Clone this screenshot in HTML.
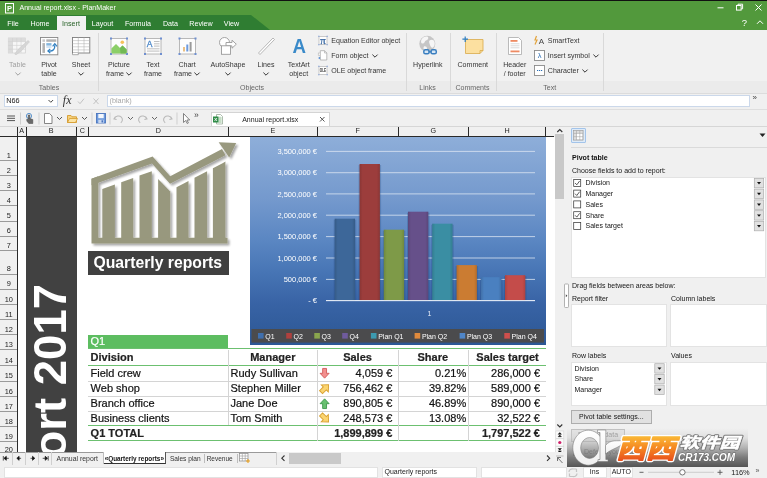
<!DOCTYPE html><html><head><meta charset="utf-8"><title>Annual report.xlsx - PlanMaker</title><style>
*{box-sizing:border-box;margin:0;padding:0}
html,body{width:767px;height:478px;overflow:hidden;background:#f0f0f0}
body{position:relative;font-family:"Liberation Sans",sans-serif;font-size:7.5px;color:#333}
.a{position:absolute}
.t{position:absolute;white-space:nowrap;line-height:10px;height:10px}
.c{text-align:center}
.r{text-align:right}
.ui{color:#3b3b3b}
svg{position:absolute;overflow:visible}
</style></head><body><div id="w" style="position:absolute;left:0;top:0;width:767px;height:478px;will-change:transform">
<div class="a" style="left:0px;top:0px;width:767px;height:30px;background:#52993c"></div>
<div class="a" style="left:0px;top:0px;width:767px;height:1.3px;background:#111"></div>
<svg style="left:0;top:15px" width="300" height="15"><polygon points="0,0 251,0 270,15 0,15" fill="#2f7d32"/></svg>
<svg style="left:5px;top:3px" width="10" height="11"><rect x="0.5" y="0.5" width="8" height="9.5" fill="none" stroke="#fff" stroke-width="1"/><text x="4.5" y="8" font-size="7.5" font-weight="bold" fill="#fff" text-anchor="middle" font-family="Liberation Sans, sans-serif">P</text></svg>
<div class="t" style="top:3.30px;font-size:7.06px;line-height:10px;height:10px;color:#fff;left:19.5px;">Annual report.xlsx - PlanMaker</div>
<div class="a" style="left:56.5px;top:16px;width:29.5px;height:14px;background:#f1f1f1"></div>
<div class="t" style="top:18.70px;font-size:7.15px;line-height:10px;height:10px;color:#fff;left:-17.0px;width:60px;text-align:center;">File</div>
<div class="t" style="top:18.70px;font-size:7.15px;line-height:10px;height:10px;color:#fff;left:10.0px;width:60px;text-align:center;">Home</div>
<div class="t" style="top:18.70px;font-size:7.15px;line-height:10px;height:10px;color:#2a632a;left:41.0px;width:60px;text-align:center;">Insert</div>
<div class="t" style="top:18.70px;font-size:7.15px;line-height:10px;height:10px;color:#fff;left:72.5px;width:60px;text-align:center;">Layout</div>
<div class="t" style="top:18.70px;font-size:7.15px;line-height:10px;height:10px;color:#fff;left:108.0px;width:60px;text-align:center;">Formula</div>
<div class="t" style="top:18.70px;font-size:7.15px;line-height:10px;height:10px;color:#fff;left:140.5px;width:60px;text-align:center;">Data</div>
<div class="t" style="top:18.70px;font-size:7.15px;line-height:10px;height:10px;color:#fff;left:171.0px;width:60px;text-align:center;">Review</div>
<div class="t" style="top:18.70px;font-size:7.15px;line-height:10px;height:10px;color:#fff;left:201.5px;width:60px;text-align:center;">View</div>
<svg style="left:700px;top:0" width="67" height="30" fill="none" stroke="#fff" stroke-width="1">
<path d="M17.5 7.8h6"/>
<rect x="36.5" y="5.5" width="4.6" height="4.6"/><path d="M38 5.5v-1.3h4.6v4.6h-1.4"/>
<path d="M55.5 4.5l6 6M61.500 4.5l-6 6"/>
<path d="M57 23.8l3-3 3 3"/>
</svg>
<div class="t" style="top:15.50px;font-size:9.5px;line-height:13px;height:13px;color:#fff;left:739.5px;width:10px;text-align:center;">?</div>
<div class="a" style="left:0px;top:30px;width:767px;height:63px;background:#f1f1f1"></div>
<div class="a" style="left:0px;top:81px;width:767px;height:11.5px;background:#ebebeb"></div>
<div class="a" style="left:0px;top:92.5px;width:767px;height:1px;background:#dcdcdc"></div>
<div class="a" style="left:98px;top:33px;width:1px;height:58px;background:#d9d9d9"></div>
<div class="a" style="left:405.5px;top:33px;width:1px;height:58px;background:#d9d9d9"></div>
<div class="a" style="left:449.5px;top:33px;width:1px;height:58px;background:#d9d9d9"></div>
<div class="a" style="left:495.5px;top:33px;width:1px;height:58px;background:#d9d9d9"></div>
<div class="a" style="left:603px;top:33px;width:1px;height:58px;background:#d9d9d9"></div>
<div class="t" style="top:59.50px;font-size:7.05px;line-height:10px;height:10px;color:#a0a0a0;left:-22.5px;width:80px;text-align:center;">Table</div>
<svg style="left:14.5px;top:71.8px" width="6" height="4"><path d="M0.4 0.6l2.6 2.6 2.6-2.6" fill="none" stroke="#a0a0a0" stroke-width="1"/></svg>
<div class="t" style="top:59.50px;font-size:7.05px;line-height:10px;height:10px;color:#353535;left:9.0px;width:80px;text-align:center;">Pivot</div>
<div class="t" style="top:68.50px;font-size:7.05px;line-height:10px;height:10px;color:#353535;left:9.0px;width:80px;text-align:center;">table</div>
<div class="t" style="top:59.50px;font-size:7.05px;line-height:10px;height:10px;color:#353535;left:41.0px;width:80px;text-align:center;">Sheet</div>
<svg style="left:78px;top:71.8px" width="6" height="4"><path d="M0.4 0.6l2.6 2.6 2.6-2.6" fill="none" stroke="#353535" stroke-width="1"/></svg>
<div class="t" style="top:59.50px;font-size:7.05px;line-height:10px;height:10px;color:#353535;left:79.0px;width:80px;text-align:center;">Picture</div>
<div class="t" style="top:68.50px;font-size:7.05px;line-height:10px;height:10px;color:#353535;left:79.0px;width:80px;text-align:center;">frame <svg style="position:static;display:inline-block;vertical-align:0" width="6" height="4"><path d="M0.4 0.6l2.6 2.6 2.6-2.6" fill="none" stroke="#353535" stroke-width="1"/></svg></div>
<div class="t" style="top:59.50px;font-size:7.05px;line-height:10px;height:10px;color:#353535;left:113.0px;width:80px;text-align:center;">Text</div>
<div class="t" style="top:68.50px;font-size:7.05px;line-height:10px;height:10px;color:#353535;left:113.0px;width:80px;text-align:center;">frame</div>
<div class="t" style="top:59.50px;font-size:7.05px;line-height:10px;height:10px;color:#353535;left:147.0px;width:80px;text-align:center;">Chart</div>
<div class="t" style="top:68.50px;font-size:7.05px;line-height:10px;height:10px;color:#353535;left:147.0px;width:80px;text-align:center;">frame <svg style="position:static;display:inline-block;vertical-align:0" width="6" height="4"><path d="M0.4 0.6l2.6 2.6 2.6-2.6" fill="none" stroke="#353535" stroke-width="1"/></svg></div>
<div class="t" style="top:59.50px;font-size:7.05px;line-height:10px;height:10px;color:#353535;left:188.0px;width:80px;text-align:center;">AutoShape</div>
<svg style="left:225px;top:71.8px" width="6" height="4"><path d="M0.4 0.6l2.6 2.6 2.6-2.6" fill="none" stroke="#353535" stroke-width="1"/></svg>
<div class="t" style="top:59.50px;font-size:7.05px;line-height:10px;height:10px;color:#353535;left:226.0px;width:80px;text-align:center;">Lines</div>
<svg style="left:263px;top:71.8px" width="6" height="4"><path d="M0.4 0.6l2.6 2.6 2.6-2.6" fill="none" stroke="#353535" stroke-width="1"/></svg>
<div class="t" style="top:59.50px;font-size:7.05px;line-height:10px;height:10px;color:#353535;left:258.7px;width:80px;text-align:center;">TextArt</div>
<div class="t" style="top:68.50px;font-size:7.05px;line-height:10px;height:10px;color:#353535;left:258.7px;width:80px;text-align:center;">object</div>
<div class="t" style="top:59.50px;font-size:7.05px;line-height:10px;height:10px;color:#353535;left:387.8px;width:80px;text-align:center;">Hyperlink</div>
<div class="t" style="top:59.50px;font-size:7.05px;line-height:10px;height:10px;color:#353535;left:432.8px;width:80px;text-align:center;">Comment</div>
<div class="t" style="top:59.50px;font-size:7.05px;line-height:10px;height:10px;color:#353535;left:474.70000000000005px;width:80px;text-align:center;">Header</div>
<div class="t" style="top:68.50px;font-size:7.05px;line-height:10px;height:10px;color:#353535;left:474.70000000000005px;width:80px;text-align:center;">/ footer</div>
<div class="t" style="top:82.60px;font-size:7.05px;line-height:10px;height:10px;color:#666;left:19.0px;width:60px;text-align:center;">Tables</div>
<div class="t" style="top:82.60px;font-size:7.05px;line-height:10px;height:10px;color:#666;left:222.0px;width:60px;text-align:center;">Objects</div>
<div class="t" style="top:82.60px;font-size:7.05px;line-height:10px;height:10px;color:#666;left:397.5px;width:60px;text-align:center;">Links</div>
<div class="t" style="top:82.60px;font-size:7.05px;line-height:10px;height:10px;color:#666;left:442.5px;width:60px;text-align:center;">Comments</div>
<div class="t" style="top:82.60px;font-size:7.05px;line-height:10px;height:10px;color:#666;left:519.7px;width:60px;text-align:center;">Text</div>
<div class="t" style="top:35.50px;font-size:7.05px;line-height:10px;height:10px;color:#353535;left:331.3px;">Equation Editor object</div>
<div class="t" style="top:50.50px;font-size:7.05px;line-height:10px;height:10px;color:#353535;left:331.3px;">Form object<svg style="position:static;display:inline-block;margin-left:3px" width="6" height="4"><path d="M0.4 0.6l2.6 2.6 2.6-2.6" fill="none" stroke="#353535" stroke-width="1"/></svg></div>
<div class="t" style="top:65.50px;font-size:7.05px;line-height:10px;height:10px;color:#353535;left:331.3px;">OLE object frame</div>
<div class="t" style="top:35.50px;font-size:7.05px;line-height:10px;height:10px;color:#353535;left:547.8px;">SmartText</div>
<div class="t" style="top:50.50px;font-size:7.05px;line-height:10px;height:10px;color:#353535;left:547.8px;">Insert symbol<svg style="position:static;display:inline-block;margin-left:3px" width="6" height="4"><path d="M0.4 0.6l2.6 2.6 2.6-2.6" fill="none" stroke="#353535" stroke-width="1"/></svg></div>
<div class="t" style="top:65.50px;font-size:7.05px;line-height:10px;height:10px;color:#353535;left:547.8px;">Character<svg style="position:static;display:inline-block;margin-left:3px" width="6" height="4"><path d="M0.4 0.6l2.6 2.6 2.6-2.6" fill="none" stroke="#353535" stroke-width="1"/></svg></div>

<svg style="left:0;top:30px" width="767" height="64">
<!-- table (disabled) -->
<rect x="8.300" y="8" width="17" height="15" fill="#f7f7f7" stroke="#cdcdcd" stroke-width="0.700"/>
<rect x="8.300" y="8" width="17" height="3.600" fill="#dcdcdc"/><rect x="8.300" y="8" width="4.200" height="15" fill="#dcdcdc"/>
<path d="M8.300 11.600h17M8.300 15.400h17M8.300 19.200h17M12.500 8v15M16.800 8v15M21.100 8v15" fill="none" stroke="#d0d0d0" stroke-width="0.600"/>
<path d="M28 10.500l-9.500 8.500-3.800 5 1.300 0.800 5-3.500 8.500-9.500z" fill="#d6d6d6" stroke="#c6c6c6" stroke-width="0.500"/>
<!-- pivot -->
<rect x="40.500" y="7.500" width="17.300" height="17.300" fill="#fff" stroke="#868686" stroke-width="0.900"/>
<rect x="46.300" y="9.300" width="10" height="2.500" fill="#b3b3b3"/><rect x="42.400" y="9.300" width="2.600" height="2.500" fill="#c9c9c9"/><rect x="42.400" y="13.100" width="2.600" height="9.800" fill="#b3b3b3"/>
<rect x="46.300" y="13.100" width="5.200" height="2.600" fill="#86b7de"/><rect x="46.300" y="15.700" width="5.200" height="2.300" fill="#d4e5f4"/>
<path d="M48.800 21C53.200 21.500 55 19 54.800 15.300" fill="none" stroke="#2f7fc1" stroke-width="1.300"/>
<path d="M52.600 16.300l2.200-2.600 2.200 2.600M50.300 18.900l-2.400 2.100 2.400 2.100" fill="none" stroke="#2f7fc1" stroke-width="1.200"/>
<!-- sheet -->
<rect x="72.500" y="7.500" width="17.300" height="15.500" fill="#fff" stroke="#7c7c7c" stroke-width="0.900"/>
<path d="M72.500 10.600h17.300M72.500 13.700h17.300M72.500 16.800h17.300M72.500 19.900h17.300M78.300 7.500v15.500M84 7.500v15.500" stroke="#b0b0b0" stroke-width="0.550" fill="none"/>
<path d="M72.500 23v1.700h5.800v-1.700" fill="#fff" stroke="#8a8a8a" stroke-width="0.700"/>
<!-- picture frame -->
<rect x="111" y="8.500" width="16" height="15.500" fill="#fdfdfd" stroke="#a9a9a9" stroke-width="0.8"/>
<path d="M111.400 23.600v-5l4.600-4.600 4 4 2.500-2.500 4.100 4.100v4z" fill="#8ccf68"/>
<path d="M120 18l2.500-2.500 4.100 4.100v4h-6z" fill="#72b955"/>
<circle cx="122.300" cy="12.300" r="1.800" fill="#f5c25a"/>
<g fill="#6f8fd0"><rect x="110" y="7.500" width="2" height="2"/><rect x="126" y="7.500" width="2" height="2"/><rect x="110" y="23" width="2" height="2"/><rect x="126" y="23" width="2" height="2"/></g>
<!-- text frame -->
<rect x="145" y="8.500" width="16" height="15.500" fill="#fdfdfd" stroke="#a9a9a9" stroke-width="0.8"/>
<text x="146.800" y="17" font-size="8.500" fill="#4a86c8" stroke="#4a86c8" stroke-width="0.300" font-family="Liberation Sans, sans-serif">A</text>
<path d="M154 11.500h5.500M154 13.800h5.500M154 16.100h5.500M147 18.800h12.500M147 21.100h12.500" stroke="#b0b0b0" stroke-width="0.8"/>
<g fill="#6f8fd0"><rect x="144" y="7.500" width="2" height="2"/><rect x="160" y="7.500" width="2" height="2"/><rect x="144" y="23" width="2" height="2"/><rect x="160" y="23" width="2" height="2"/></g>
<!-- chart frame -->
<rect x="179.500" y="8.500" width="16" height="15.500" fill="#fdfdfd" stroke="#a9a9a9" stroke-width="0.8"/>
<rect x="183" y="17" width="2" height="4.500" fill="#ebc083"/><rect x="186.300" y="14.500" width="2" height="7" fill="#6c9ade"/><rect x="189.600" y="12" width="2" height="9.500" fill="#9a9a9a"/>
<g fill="#6f8fd0"><rect x="178.500" y="7.500" width="2" height="2"/><rect x="194.500" y="7.500" width="2" height="2"/><rect x="178.500" y="23" width="2" height="2"/><rect x="194.500" y="23" width="2" height="2"/></g>
<!-- autoshape -->
<circle cx="224.500" cy="12.500" r="5" fill="#fff" stroke="#9a9a9a" stroke-width="0.9"/>
<path d="M226 12.500h6v-2.300l4.300 4-4.300 4v-2.300h-6z" fill="#fff" stroke="#9a9a9a" stroke-width="0.9"/>
<rect x="221.500" y="15.800" width="9" height="8.500" fill="#fff" stroke="#9a9a9a" stroke-width="0.9"/>
<!-- lines -->
<path d="M258.500 23l14.500-15 1.500 1.500-14.500 15z" fill="#fff" stroke="#a6a6a6" stroke-width="0.8"/>
<!-- textart -->
<text x="292.500" y="23.300" font-size="21" font-weight="bold" fill="#3a8ac9" textLength="13.500" lengthAdjust="spacingAndGlyphs" font-family="Liberation Sans, sans-serif">A</text>
<!-- small icons left -->
<rect x="319" y="6.500" width="8" height="8" fill="#fff" stroke="#b5b5b5" stroke-width="0.7"/><text x="323" y="13.600" font-size="11" fill="#2c5f9e" stroke="#2c5f9e" stroke-width="0.250" text-anchor="middle" font-family="Liberation Serif, serif">π</text>
<g fill="#8aa6dc"><rect x="318.200" y="5.700" width="1.200" height="1.200"/><rect x="326.600" y="5.700" width="1.200" height="1.200"/><rect x="318.200" y="14.100" width="1.200" height="1.200"/><rect x="326.600" y="14.100" width="1.200" height="1.200"/></g>
<path d="M320.300 20.700h4.200l2.300 2.300v7h-6.500z" fill="#fff" stroke="#a2a2a2" stroke-width="0.700"/><path d="M324.500 20.700v2.300h2.300" fill="none" stroke="#a2a2a2" stroke-width="0.600"/><rect x="318.200" y="23" width="2.400" height="2.400" fill="#f3f3f3" stroke="#b0b0b0" stroke-width="0.500"/><circle cx="319.400" cy="28" r="0.900" fill="#5b8fd0"/>
<rect x="319" y="36.500" width="8" height="8" fill="#fff" stroke="#b5b5b5" stroke-width="0.7"/><text x="323" y="42.300" font-size="4.600" font-weight="bold" fill="#333" text-anchor="middle" textLength="6.400" lengthAdjust="spacingAndGlyphs" font-family="Liberation Sans, sans-serif">OLE</text>
<g fill="#8aa6dc"><rect x="318.200" y="35.700" width="1.200" height="1.200"/><rect x="326.600" y="35.700" width="1.200" height="1.200"/><rect x="318.200" y="44.100" width="1.200" height="1.200"/><rect x="326.600" y="44.100" width="1.200" height="1.200"/></g>
<!-- hyperlink -->
<circle cx="427.300" cy="13.800" r="8" fill="#c6c6c6"/>
<path d="M421.500 9.500c1.500-2.500 4.500-3.500 6.500-2.500 1 1.500-0.500 3-2 3.500s-1 2.500-3 3-2.500-2-1.500-4zM429.500 10.500c2-1.500 4.500-0.500 5 1.500s0 4.500-1.500 5.500-2.500-1-3-2.500-1.500-3.500-0.500-4.500zM424 16.500c1.500-0.500 3 0.500 3 2s-1.500 2-2.500 1.500-1.500-2.500-0.500-3.500z" fill="#f6f6f6"/>
<g fill="#d7e6f4" stroke="#3a7fc0" stroke-width="1.500"><rect x="423.800" y="19.800" width="5.300" height="4" rx="1.600"/><rect x="431" y="19.800" width="5.300" height="4" rx="1.600"/></g><path d="M428.500 21.800h3.200" stroke="#3a7fc0" stroke-width="1.400"/>
<!-- comment -->
<path d="M465.500 9.500h17.500v11l-3 3h-14.500z" fill="#fce0a0" stroke="#d9a94a" stroke-width="0.800"/><path d="M483 20.500h-3v3" fill="none" stroke="#d9a94a" stroke-width="0.800"/>
<path d="M465.200 6.400v5.600M462.400 9.200h5.600" stroke="#2f7fc1" stroke-width="1.200" fill="none"/>
<!-- header/footer -->
<path d="M508.500 7.500h10l3 3v14h-13z" fill="#fff" stroke="#a9a9a9" stroke-width="0.8"/>
<rect x="510.500" y="10" width="7" height="1.800" fill="#ee8a62"/><rect x="510.500" y="20.500" width="9" height="1.800" fill="#ee8a62"/>
<path d="M510.500 13.800h9M510.500 15.800h9M510.500 17.800h9" stroke="#c9c9c9" stroke-width="0.7"/>
<!-- small icons right -->
<path d="M536.500 6l-1.500 4h2l-2 4.500" fill="none" stroke="#e2a33c" stroke-width="1.200"/><text x="541.300" y="14" font-size="8" fill="#444" text-anchor="middle" font-family="Liberation Sans, sans-serif">A</text>
<rect x="534.500" y="20.500" width="10" height="10" fill="#fff" stroke="#8a8a8a" stroke-width="0.9"/><text x="539.500" y="28.300" font-size="7.500" fill="#2c6fb5" text-anchor="middle" font-family="Liberation Sans, sans-serif">λ</text>
<rect x="534.500" y="35.500" width="10" height="10" fill="#fff" stroke="#8a8a8a" stroke-width="0.9"/><path d="M537 40.500h1.200M539 40.500h1.200M541 40.500h1.200" stroke="#2c6fb5" stroke-width="1.200"/>
</svg>

<div class="a" style="left:0px;top:93.5px;width:767px;height:15.5px;background:#f0f0f0"></div>
<div class="a" style="left:3.5px;top:94.5px;width:54px;height:12px;background:#fff;border:1px solid #cbd8ea"></div>
<div class="t" style="top:95.70px;font-size:7.3px;line-height:10px;height:10px;color:#222;left:6.3px;">N66</div>
<svg style="left:48px;top:99px" width="6" height="5"><path d="M0.500 1l2.300 2.300 2.300-2.300" fill="none" stroke="#333" stroke-width="0.9"/></svg>
<div class="t" style="left:62.800px;top:93.200px;font-family:'Liberation Serif',serif;font-style:italic;font-size:12px;line-height:14px;height:14px;color:#333">fx</div>
<svg style="left:76px;top:95.500px" width="26" height="10" fill="none" stroke="#c2c2c2" stroke-width="1"><path d="M2 5.500l2 2.200 4-5"/><path d="M17.500 2.500l5 5.500M22.500 2.500l-5 5.500"/></svg>
<div class="a" style="left:107px;top:94.5px;width:642.5px;height:12px;background:#fff;border:1px solid #cbd8ea"></div>
<div class="t" style="top:95.70px;font-size:7.3px;line-height:10px;height:10px;color:#a8a8a8;left:109.5px;">(blank)</div>
<div class="t" style="top:92.10px;font-size:8px;line-height:11px;height:11px;color:#444;left:752.5px;">»</div>
<div class="a" style="left:0px;top:109px;width:767px;height:1px;background:#dedede"></div>
<div class="a" style="left:0px;top:110px;width:767px;height:16px;background:#f0f0f0"></div>
<div class="a" style="left:0px;top:126px;width:767px;height:1px;background:#d6d6d6"></div>
<svg style="left:0;top:109.900px" width="210" height="16" fill="none">
<path d="M7 6h8M7 8.300h8M7 10.600h8" stroke="#555" stroke-width="1"/>
<path d="M20.500 2.500v12M39 2.500v12M92 2.500v12M110 2.500v12M177 2.500v12" stroke="#cfcfcf" stroke-width="1"/>
<circle cx="29" cy="6" r="2.600" stroke="#4a88c7" stroke-width="0.9"/>
<path d="M28.300 5v5l-1.500-1v2l2 2.500h4v-4l-3-1v-3.500z" fill="#6a6a6a" stroke="#444" stroke-width="0.500"/>
<path d="M44.500 3.500h5l2.500 2.500v7.500h-7.500z" fill="#fff" stroke="#777" stroke-width="0.900"/>
<path d="M57 7l2.500 2.500 2.500-2.500" stroke="#555" stroke-width="1"/>
<path d="M67.500 12.500v-7h3.500l1 1.300h4.500v5.700z" fill="#f7d27c" stroke="#d49a2e" stroke-width="0.900"/>
<path d="M67.500 12.500l2-4h8l-2 4z" fill="#fbe3a3" stroke="#d49a2e" stroke-width="0.800"/>
<path d="M82 7l2.500 2.500 2.500-2.500" stroke="#555" stroke-width="1"/>
<rect x="96.500" y="3.500" width="9" height="9.500" fill="#6c99dc" stroke="#4a74bd" stroke-width="0.900"/>
<rect x="98.300" y="4" width="5.400" height="4.200" fill="#f4f7fc"/><rect x="98.300" y="9.800" width="5.400" height="3.200" fill="#c9d8f0"/><rect x="101.500" y="10.300" width="1.500" height="2.200" fill="#4a74bd"/>
<path d="M115.500 6.500l-1.500 2.300 2.600 0.700M114.300 8.600c1.500-2.800 5-3.500 7-1.500s1 4.600-0.500 5.600" stroke="#b9b9b9" stroke-width="1.100"/>
<path d="M128 7l2.500 2.500 2.500-2.500" stroke="#666" stroke-width="1"/>
<path d="M145.500 6.500l1.500 2.300-2.600 0.700M146.700 8.600c-1.500-2.800-5-3.500-7-1.500s-1 4.600 0.500 5.600" stroke="#b9b9b9" stroke-width="1.100"/>
<path d="M152 7l2.500 2.500 2.500-2.500" stroke="#666" stroke-width="1"/>
<path d="M170.500 6.500l1.500 2.300-2.600 0.700M171.700 8.600c-1.500-2.800-5-3.500-7-1.500s-1 4.600 0.500 5.600" stroke="#b9b9b9" stroke-width="1.100"/>
<path d="M183.500 3.500v9l2.200-2 1.500 3 1.200-0.600-1.500-2.900h2.800z" fill="#fff" stroke="#666" stroke-width="0.800"/>
</svg>
<div class="t" style="top:109.00px;font-size:8.5px;line-height:12px;height:12px;color:#444;left:194px;">»</div>
<div class="a" style="left:210.5px;top:111.6px;width:119.3px;height:14.6px;background:#fff;border:1px solid #d4d4d4;border-bottom:none"></div>
<svg style="left:212px;top:112.500px" width="12" height="12"><path d="M4.500 1.500h4l2 2v7.500h-6z" fill="#fff" stroke="#8aa08a" stroke-width="0.700"/><path d="M6 5h4M6 7h4M6 9h4M8 3.500v6.500" stroke="#8fc08f" stroke-width="0.600"/><rect x="1" y="3.500" width="5.500" height="6" fill="#2e8b47"/><path d="M2.500 5l2.500 3M5 5l-2.500 3" stroke="#fff" stroke-width="0.800"/></svg>
<div class="t" style="top:114.60px;font-size:7.0px;line-height:10px;height:10px;color:#222;left:220.2px;width:100px;text-align:center;">Annual report.xlsx</div>
<svg style="left:319px;top:116.300px" width="7" height="7"><path d="M1 1l4.500 4.500M5.500 1l-4.500 4.500" stroke="#444" stroke-width="0.900"/></svg>
<div class="a" style="left:0px;top:127px;width:555px;height:325px;background:#fff"></div>
<div class="a" style="left:0px;top:127px;width:555px;height:9.5px;background:#f0f0f0"></div>
<div class="a" style="left:0px;top:136px;width:554px;height:1px;background:#2a2a2a"></div>
<div class="a" style="left:17.0px;top:127px;width:1px;height:9.5px;background:#2a2a2a"></div>
<div class="a" style="left:25.5px;top:127px;width:1px;height:9.5px;background:#2a2a2a"></div>
<div class="a" style="left:76.0px;top:127px;width:1px;height:9.5px;background:#2a2a2a"></div>
<div class="a" style="left:87.5px;top:127px;width:1px;height:9.5px;background:#2a2a2a"></div>
<div class="a" style="left:228.0px;top:127px;width:1px;height:9.5px;background:#2a2a2a"></div>
<div class="a" style="left:317.0px;top:127px;width:1px;height:9.5px;background:#2a2a2a"></div>
<div class="a" style="left:397.5px;top:127px;width:1px;height:9.5px;background:#2a2a2a"></div>
<div class="a" style="left:468.0px;top:127px;width:1px;height:9.5px;background:#2a2a2a"></div>
<div class="a" style="left:545.0px;top:127px;width:1px;height:9.5px;background:#2a2a2a"></div>
<div class="t" style="top:126.30px;font-size:7.2px;line-height:10px;height:10px;color:#222;left:11.75px;width:20px;text-align:center;">A</div>
<div class="t" style="top:126.30px;font-size:7.2px;line-height:10px;height:10px;color:#222;left:41.25px;width:20px;text-align:center;">B</div>
<div class="t" style="top:126.30px;font-size:7.2px;line-height:10px;height:10px;color:#222;left:72.25px;width:20px;text-align:center;">C</div>
<div class="t" style="top:126.30px;font-size:7.2px;line-height:10px;height:10px;color:#222;left:148.25px;width:20px;text-align:center;">D</div>
<div class="t" style="top:126.30px;font-size:7.2px;line-height:10px;height:10px;color:#222;left:263.0px;width:20px;text-align:center;">E</div>
<div class="t" style="top:126.30px;font-size:7.2px;line-height:10px;height:10px;color:#222;left:347.75px;width:20px;text-align:center;">F</div>
<div class="t" style="top:126.30px;font-size:7.2px;line-height:10px;height:10px;color:#222;left:423.25px;width:20px;text-align:center;">G</div>
<div class="t" style="top:126.30px;font-size:7.2px;line-height:10px;height:10px;color:#222;left:497.0px;width:20px;text-align:center;">H</div>
<div class="a" style="left:0px;top:137px;width:17px;height:315px;background:#f0f0f0"></div>
<div class="a" style="left:17px;top:136px;width:1px;height:316px;background:#2a2a2a"></div>
<div class="a" style="left:0px;top:160.1px;width:17px;height:1px;background:#9a9a9a"></div>
<div class="t" style="top:149.90px;font-size:7.4px;line-height:11px;height:11px;color:#222;left:0.8000000000000007px;width:16px;text-align:center;">1</div>
<div class="a" style="left:0px;top:175.2px;width:17px;height:1px;background:#9a9a9a"></div>
<div class="t" style="top:165.00px;font-size:7.4px;line-height:11px;height:11px;color:#222;left:0.8000000000000007px;width:16px;text-align:center;">2</div>
<div class="a" style="left:0px;top:190.3px;width:17px;height:1px;background:#9a9a9a"></div>
<div class="t" style="top:180.10px;font-size:7.4px;line-height:11px;height:11px;color:#222;left:0.8000000000000007px;width:16px;text-align:center;">3</div>
<div class="a" style="left:0px;top:205.4px;width:17px;height:1px;background:#9a9a9a"></div>
<div class="t" style="top:195.20px;font-size:7.4px;line-height:11px;height:11px;color:#222;left:0.8000000000000007px;width:16px;text-align:center;">4</div>
<div class="a" style="left:0px;top:220.5px;width:17px;height:1px;background:#9a9a9a"></div>
<div class="t" style="top:210.30px;font-size:7.4px;line-height:11px;height:11px;color:#222;left:0.8000000000000007px;width:16px;text-align:center;">5</div>
<div class="a" style="left:0px;top:235.5px;width:17px;height:1px;background:#9a9a9a"></div>
<div class="t" style="top:225.30px;font-size:7.4px;line-height:11px;height:11px;color:#222;left:0.8000000000000007px;width:16px;text-align:center;">6</div>
<div class="a" style="left:0px;top:250.3px;width:17px;height:1px;background:#9a9a9a"></div>
<div class="t" style="top:240.10px;font-size:7.4px;line-height:11px;height:11px;color:#222;left:0.8000000000000007px;width:16px;text-align:center;">7</div>
<div class="a" style="left:0px;top:273.5px;width:17px;height:1px;background:#9a9a9a"></div>
<div class="t" style="top:263.30px;font-size:7.4px;line-height:11px;height:11px;color:#222;left:0.8000000000000007px;width:16px;text-align:center;">8</div>
<div class="a" style="left:0px;top:288.5px;width:17px;height:1px;background:#9a9a9a"></div>
<div class="t" style="top:278.30px;font-size:7.4px;line-height:11px;height:11px;color:#222;left:0.8000000000000007px;width:16px;text-align:center;">9</div>
<div class="a" style="left:0px;top:304.0px;width:17px;height:1px;background:#9a9a9a"></div>
<div class="t" style="top:293.80px;font-size:7.4px;line-height:11px;height:11px;color:#222;left:0.8000000000000007px;width:16px;text-align:center;">10</div>
<div class="a" style="left:0px;top:319.1px;width:17px;height:1px;background:#9a9a9a"></div>
<div class="t" style="top:308.90px;font-size:7.4px;line-height:11px;height:11px;color:#222;left:0.8000000000000007px;width:16px;text-align:center;">11</div>
<div class="a" style="left:0px;top:334.2px;width:17px;height:1px;background:#9a9a9a"></div>
<div class="t" style="top:324.00px;font-size:7.4px;line-height:11px;height:11px;color:#222;left:0.8000000000000007px;width:16px;text-align:center;">12</div>
<div class="a" style="left:0px;top:349.3px;width:17px;height:1px;background:#9a9a9a"></div>
<div class="t" style="top:339.10px;font-size:7.4px;line-height:11px;height:11px;color:#222;left:0.8000000000000007px;width:16px;text-align:center;">13</div>
<div class="a" style="left:0px;top:365.1px;width:17px;height:1px;background:#9a9a9a"></div>
<div class="t" style="top:354.90px;font-size:7.4px;line-height:11px;height:11px;color:#222;left:0.8000000000000007px;width:16px;text-align:center;">14</div>
<div class="a" style="left:0px;top:380.5px;width:17px;height:1px;background:#9a9a9a"></div>
<div class="t" style="top:370.30px;font-size:7.4px;line-height:11px;height:11px;color:#222;left:0.8000000000000007px;width:16px;text-align:center;">15</div>
<div class="a" style="left:0px;top:395.8px;width:17px;height:1px;background:#9a9a9a"></div>
<div class="t" style="top:385.60px;font-size:7.4px;line-height:11px;height:11px;color:#222;left:0.8000000000000007px;width:16px;text-align:center;">16</div>
<div class="a" style="left:0px;top:410.8px;width:17px;height:1px;background:#9a9a9a"></div>
<div class="t" style="top:400.60px;font-size:7.4px;line-height:11px;height:11px;color:#222;left:0.8000000000000007px;width:16px;text-align:center;">17</div>
<div class="a" style="left:0px;top:425.7px;width:17px;height:1px;background:#9a9a9a"></div>
<div class="t" style="top:415.50px;font-size:7.4px;line-height:11px;height:11px;color:#222;left:0.8000000000000007px;width:16px;text-align:center;">18</div>
<div class="a" style="left:0px;top:440.8px;width:17px;height:1px;background:#9a9a9a"></div>
<div class="t" style="top:430.60px;font-size:7.4px;line-height:11px;height:11px;color:#222;left:0.8000000000000007px;width:16px;text-align:center;">19</div>
<div class="t" style="top:443.90px;font-size:7.4px;line-height:11px;height:11px;color:#222;left:0.8000000000000007px;width:16px;text-align:center;">20</div>
<div class="a" style="left:26px;top:137px;width:50.5px;height:315px;background:#414141;overflow:hidden"><div style="position:absolute;left:0;top:0;width:50.5px;height:315px"><div style="position:absolute;left:46.8px;top:147px;transform-origin:0 0;transform:rotate(-90deg) translate(-100%,-100%);white-space:nowrap;font-size:45.5px;line-height:45.5px;font-weight:bold;color:#fff;">Annual report 2017</div></div></div>
<svg style="left:0;top:0" width="260" height="300"><defs><filter id="ds" x="-10%" y="-10%" width="130%" height="130%"><feGaussianBlur in="SourceAlpha" stdDeviation="1.2"/><feOffset dx="1.5" dy="1.5"/><feComponentTransfer><feFuncA type="linear" slope="0.35"/></feComponentTransfer><feMerge><feMergeNode/><feMergeNode in="SourceGraphic"/></feMerge></filter></defs><g filter="url(#ds)" fill="#98987e"><polygon points="102.3,189.1 114.9,184.5 114.9,238.0 102.3,238.0"/><polygon points="121.2,182.3 133.2,177.9 133.2,238.0 121.2,238.0"/><polygon points="139.5,175.6 151.8,171.2 151.8,238.0 139.5,238.0"/><polygon points="158.1,179.0 170.2,191.5 170.2,238.0 158.1,238.0"/><polygon points="176.5,187.2 188.5,180.9 188.5,238.0 176.5,238.0"/><polygon points="194.5,177.8 207.1,171.2 207.1,238.0 194.5,238.0"/><polygon points="212.9,168.2 223.0,162.9 225.4,161.6 225.4,238.0 212.9,238.0"/><polygon points="91.5,178.7 98.3,176.3 98.3,237.8 227.500,237.8 227.500,243.500 91.5,243.500"/><polygon points="91.5,178.7 152.6,156.6 170.2,176.2 222.0,149.1 225.5,155.2 170.0,183.8 152.0,163.4 91.5,185.3"/><polygon points="218.700,142.300 236.200,143 229.200,157.400"/></g></svg>
<div class="a" style="left:88.3px;top:250.9px;width:140.3px;height:23.8px;background:#404040"></div>
<div class="t" style="top:252.40px;font-size:15.75px;line-height:21px;height:21px;color:#fff;font-weight:bold;left:87.80000000000001px;width:140px;text-align:center;">Quarterly reports</div>
<div class="a" style="left:250px;top:137px;width:296px;height:207.5px;background:linear-gradient(180deg,#8eaed9 0%,#7499cd 30%,#5a86c2 50%,#4775b5 65%,#3863a5 80%,#2c5794 100%)"></div>
<svg style="left:0;top:0" width="767" height="478"><path d="M326 151.4H535" stroke="#d9e3f1" stroke-width="0.9" opacity="0.9"/><text x="317" y="154.0" font-size="7.500" fill="#fff" text-anchor="end" font-family="Liberation Sans, sans-serif">3,500,000 €</text><path d="M326 172.7H535" stroke="#d9e3f1" stroke-width="0.9" opacity="0.9"/><text x="317" y="175.29999999999998" font-size="7.500" fill="#fff" text-anchor="end" font-family="Liberation Sans, sans-serif">3,000,000 €</text><path d="M326 193.9H535" stroke="#d9e3f1" stroke-width="0.9" opacity="0.9"/><text x="317" y="196.5" font-size="7.500" fill="#fff" text-anchor="end" font-family="Liberation Sans, sans-serif">2,500,000 €</text><path d="M326 215.2H535" stroke="#d9e3f1" stroke-width="0.9" opacity="0.9"/><text x="317" y="217.79999999999998" font-size="7.500" fill="#fff" text-anchor="end" font-family="Liberation Sans, sans-serif">2,000,000 €</text><path d="M326 236.6H535" stroke="#d9e3f1" stroke-width="0.9" opacity="0.9"/><text x="317" y="239.2" font-size="7.500" fill="#fff" text-anchor="end" font-family="Liberation Sans, sans-serif">1,500,000 €</text><path d="M326 258H535" stroke="#d9e3f1" stroke-width="0.9" opacity="0.9"/><text x="317" y="260.6" font-size="7.500" fill="#fff" text-anchor="end" font-family="Liberation Sans, sans-serif">1,000,000 €</text><path d="M326 279.4H535" stroke="#d9e3f1" stroke-width="0.9" opacity="0.9"/><text x="317" y="282.0" font-size="7.500" fill="#fff" text-anchor="end" font-family="Liberation Sans, sans-serif">500,000 €</text><path d="M326 300.6H535" stroke="#d9e3f1" stroke-width="0.9" opacity="0.9"/><text x="317" y="303.20000000000005" font-size="7.500" fill="#fff" text-anchor="end" font-family="Liberation Sans, sans-serif">- €</text><defs><linearGradient id="sh" x1="0" x2="1"><stop offset="0" stop-color="#000" stop-opacity="0.12"/><stop offset="0.15" stop-color="#000" stop-opacity="0"/><stop offset="0.85" stop-color="#000" stop-opacity="0"/><stop offset="1" stop-color="#000" stop-opacity="0.12"/></linearGradient></defs><rect x="333.7" y="219.7" width="22.500" height="80.7" fill="#1d3f75" opacity="0.25"/><rect x="334.7" y="218.7" width="20.300" height="81.7" fill="#3d6799"/><rect x="334.7" y="218.7" width="20.300" height="81.7" fill="url(#sh)"/><rect x="358.6" y="165" width="22.500" height="135.4" fill="#1d3f75" opacity="0.25"/><rect x="359.6" y="164" width="20.300" height="136.4" fill="#9c3d3c"/><rect x="359.6" y="164" width="20.300" height="136.4" fill="url(#sh)"/><rect x="382.8" y="230.7" width="22.500" height="69.7" fill="#1d3f75" opacity="0.25"/><rect x="383.8" y="229.7" width="20.300" height="70.7" fill="#7e9a48"/><rect x="383.8" y="229.7" width="20.300" height="70.7" fill="url(#sh)"/><rect x="407" y="212.7" width="22.500" height="87.7" fill="#1d3f75" opacity="0.25"/><rect x="408" y="211.7" width="20.300" height="88.7" fill="#66508a"/><rect x="408" y="211.7" width="20.300" height="88.7" fill="url(#sh)"/><rect x="431.2" y="224.7" width="22.500" height="75.7" fill="#1d3f75" opacity="0.25"/><rect x="432.2" y="223.7" width="20.300" height="76.7" fill="#3a8ea3"/><rect x="432.2" y="223.7" width="20.300" height="76.7" fill="url(#sh)"/><rect x="455.6" y="266.1" width="22.500" height="34.3" fill="#1d3f75" opacity="0.25"/><rect x="456.6" y="265.1" width="20.300" height="35.3" fill="#cb7c32"/><rect x="456.6" y="265.1" width="20.300" height="35.3" fill="url(#sh)"/><rect x="480" y="278.2" width="22.500" height="22.2" fill="#1d3f75" opacity="0.25"/><rect x="481" y="277.2" width="20.300" height="23.2" fill="#4a80c0"/><rect x="481" y="277.2" width="20.300" height="23.2" fill="url(#sh)"/><rect x="504" y="276.2" width="22.500" height="24.2" fill="#1d3f75" opacity="0.25"/><rect x="505" y="275.2" width="20.300" height="25.2" fill="#c44c4a"/><rect x="505" y="275.2" width="20.300" height="25.2" fill="url(#sh)"/><path d="M326 300.600H535" stroke="#e6edf7" stroke-width="1"/><text x="429.500" y="316" font-size="7" fill="#e8eef7" text-anchor="middle" font-family="Liberation Sans, sans-serif">1</text><rect x="251.500" y="329" width="292.500" height="13.600" fill="#4b4b4d"/><rect x="258" y="333" width="5.600" height="5.600" fill="#3f6fae"/><text x="265.3" y="338.500" font-size="7" fill="#fff" font-family="Liberation Sans, sans-serif">Q1</text><rect x="286.2" y="333" width="5.600" height="5.600" fill="#b0413e"/><text x="293.5" y="338.500" font-size="7" fill="#fff" font-family="Liberation Sans, sans-serif">Q2</text><rect x="314.3" y="333" width="5.600" height="5.600" fill="#8aa64d"/><text x="321.6" y="338.500" font-size="7" fill="#fff" font-family="Liberation Sans, sans-serif">Q3</text><rect x="342.2" y="333" width="5.600" height="5.600" fill="#6f5b9c"/><text x="349.5" y="338.500" font-size="7" fill="#fff" font-family="Liberation Sans, sans-serif">Q4</text><rect x="370.9" y="333" width="5.600" height="5.600" fill="#3c9ab0"/><text x="378.2" y="338.500" font-size="7" fill="#fff" font-family="Liberation Sans, sans-serif">Plan Q1</text><rect x="414.6" y="333" width="5.600" height="5.600" fill="#e08a3c"/><text x="421.90000000000003" y="338.500" font-size="7" fill="#fff" font-family="Liberation Sans, sans-serif">Plan Q2</text><rect x="459.6" y="333" width="5.600" height="5.600" fill="#4f86c9"/><text x="466.90000000000003" y="338.500" font-size="7" fill="#fff" font-family="Liberation Sans, sans-serif">Plan Q3</text><rect x="504.3" y="333" width="5.600" height="5.600" fill="#cf4f4c"/><text x="511.6" y="338.500" font-size="7" fill="#fff" font-family="Liberation Sans, sans-serif">Plan Q4</text></svg>
<div class="a" style="left:88px;top:334.5px;width:139.5px;height:14.5px;background:#5dbd61"></div>
<div class="t" style="top:333.50px;font-size:11px;line-height:15px;height:15px;color:#fff;-webkit-text-stroke:0.2px currentColor;left:90.5px;">Q1</div>
<div class="a" style="left:88px;top:348.3px;width:457.5px;height:1.2px;background:#6cc070"></div>
<div class="a" style="left:88px;top:364.7px;width:457.5px;height:1.2px;background:#6cc070"></div>
<div class="a" style="left:88px;top:424.5px;width:457.5px;height:1.2px;background:#6cc070"></div>
<div class="a" style="left:88px;top:440.3px;width:457.5px;height:1.2px;background:#6cc070"></div>
<div class="a" style="left:88px;top:380.6px;width:457.5px;height:1px;background:#d4d4d4"></div>
<div class="a" style="left:88px;top:395.8px;width:457.5px;height:1px;background:#d4d4d4"></div>
<div class="a" style="left:88px;top:410.6px;width:457.5px;height:1px;background:#d4d4d4"></div>
<div class="a" style="left:227.5px;top:349.5px;width:1px;height:75px;background:#d4d4d4"></div>
<div class="a" style="left:317px;top:349.5px;width:1px;height:91px;background:#d4d4d4"></div>
<div class="a" style="left:397.5px;top:349.5px;width:1px;height:91px;background:#d4d4d4"></div>
<div class="a" style="left:468.3px;top:349.5px;width:1px;height:91px;background:#d4d4d4"></div>
<div class="t" style="top:350.00px;font-size:11px;line-height:15px;height:15px;color:#222;font-weight:bold;-webkit-text-stroke:0.2px currentColor;left:90.6px;">Division</div>
<div class="t" style="top:350.00px;font-size:11px;line-height:15px;height:15px;color:#222;font-weight:bold;-webkit-text-stroke:0.2px currentColor;left:227.8px;width:90px;text-align:center;">Manager</div>
<div class="t" style="top:350.00px;font-size:11px;line-height:15px;height:15px;color:#222;font-weight:bold;-webkit-text-stroke:0.2px currentColor;left:317.5px;width:80px;text-align:center;">Sales</div>
<div class="t" style="top:350.00px;font-size:11px;line-height:15px;height:15px;color:#222;font-weight:bold;-webkit-text-stroke:0.2px currentColor;left:397.8px;width:70px;text-align:center;">Share</div>
<div class="t" style="top:350.00px;font-size:11px;line-height:15px;height:15px;color:#222;font-weight:bold;-webkit-text-stroke:0.2px currentColor;left:467.5px;width:80px;text-align:center;">Sales target</div>
<div class="t" style="top:365.90px;font-size:11px;line-height:15px;height:15px;color:#111;-webkit-text-stroke:0.2px currentColor;left:90.6px;">Field crew</div>
<div class="t" style="top:365.90px;font-size:11px;line-height:15px;height:15px;color:#111;-webkit-text-stroke:0.2px currentColor;left:230.5px;">Rudy Sullivan</div>
<div class="t" style="top:365.90px;font-size:11px;line-height:15px;height:15px;color:#111;-webkit-text-stroke:0.2px currentColor;left:322.3px;width:70px;text-align:right;">4,059 €</div>
<div class="t" style="top:365.90px;font-size:11px;line-height:15px;height:15px;color:#111;-webkit-text-stroke:0.2px currentColor;left:406.2px;width:60px;text-align:right;">0.21%</div>
<div class="t" style="top:365.90px;font-size:11px;line-height:15px;height:15px;color:#111;-webkit-text-stroke:0.2px currentColor;left:470px;width:70px;text-align:right;">286,000 €</div>
<div class="t" style="top:381.10px;font-size:11px;line-height:15px;height:15px;color:#111;-webkit-text-stroke:0.2px currentColor;left:90.6px;">Web shop</div>
<div class="t" style="top:381.10px;font-size:11px;line-height:15px;height:15px;color:#111;-webkit-text-stroke:0.2px currentColor;left:230.5px;">Stephen Miller</div>
<div class="t" style="top:381.10px;font-size:11px;line-height:15px;height:15px;color:#111;-webkit-text-stroke:0.2px currentColor;left:322.3px;width:70px;text-align:right;">756,462 €</div>
<div class="t" style="top:381.10px;font-size:11px;line-height:15px;height:15px;color:#111;-webkit-text-stroke:0.2px currentColor;left:406.2px;width:60px;text-align:right;">39.82%</div>
<div class="t" style="top:381.10px;font-size:11px;line-height:15px;height:15px;color:#111;-webkit-text-stroke:0.2px currentColor;left:470px;width:70px;text-align:right;">589,000 €</div>
<div class="t" style="top:396.10px;font-size:11px;line-height:15px;height:15px;color:#111;-webkit-text-stroke:0.2px currentColor;left:90.6px;">Branch office</div>
<div class="t" style="top:396.10px;font-size:11px;line-height:15px;height:15px;color:#111;-webkit-text-stroke:0.2px currentColor;left:230.5px;">Jane Doe</div>
<div class="t" style="top:396.10px;font-size:11px;line-height:15px;height:15px;color:#111;-webkit-text-stroke:0.2px currentColor;left:322.3px;width:70px;text-align:right;">890,805 €</div>
<div class="t" style="top:396.10px;font-size:11px;line-height:15px;height:15px;color:#111;-webkit-text-stroke:0.2px currentColor;left:406.2px;width:60px;text-align:right;">46.89%</div>
<div class="t" style="top:396.10px;font-size:11px;line-height:15px;height:15px;color:#111;-webkit-text-stroke:0.2px currentColor;left:470px;width:70px;text-align:right;">890,000 €</div>
<div class="t" style="top:410.70px;font-size:11px;line-height:15px;height:15px;color:#111;-webkit-text-stroke:0.2px currentColor;left:90.6px;">Business clients</div>
<div class="t" style="top:410.70px;font-size:11px;line-height:15px;height:15px;color:#111;-webkit-text-stroke:0.2px currentColor;left:230.5px;">Tom Smith</div>
<div class="t" style="top:410.70px;font-size:11px;line-height:15px;height:15px;color:#111;-webkit-text-stroke:0.2px currentColor;left:322.3px;width:70px;text-align:right;">248,573 €</div>
<div class="t" style="top:410.70px;font-size:11px;line-height:15px;height:15px;color:#111;-webkit-text-stroke:0.2px currentColor;left:406.2px;width:60px;text-align:right;">13.08%</div>
<div class="t" style="top:410.70px;font-size:11px;line-height:15px;height:15px;color:#111;-webkit-text-stroke:0.2px currentColor;left:470px;width:70px;text-align:right;">32,522 €</div>
<div class="t" style="top:425.80px;font-size:11px;line-height:15px;height:15px;color:#222;font-weight:bold;-webkit-text-stroke:0.2px currentColor;left:90.6px;">Q1 TOTAL</div>
<div class="t" style="top:425.80px;font-size:11px;line-height:15px;height:15px;color:#222;font-weight:bold;-webkit-text-stroke:0.2px currentColor;left:312.3px;width:80px;text-align:right;">1,899,899 €</div>
<div class="t" style="top:425.80px;font-size:11px;line-height:15px;height:15px;color:#222;font-weight:bold;-webkit-text-stroke:0.2px currentColor;left:460px;width:80px;text-align:right;">1,797,522 €</div>
<svg style="left:0;top:0" width="767" height="478"><path d="M0 -4.500L4.200 0H1.800V4.500H-1.800V0H-4.200Z" transform="translate(324.6,373.3) rotate(180) scale(1.08)" fill="#f3908e" stroke="#cf5757" stroke-width="0.800"/><path d="M0 -4.500L4.200 0H1.800V4.500H-1.800V0H-4.200Z" transform="translate(324.8,388.4) rotate(45) scale(1.18)" fill="#fbd46f" stroke="#d9a233" stroke-width="0.800"/><path d="M0 -4.500L4.200 0H1.800V4.500H-1.800V0H-4.200Z" transform="translate(324.6,403.7) rotate(0) scale(1.08)" fill="#68c070" stroke="#3a9548" stroke-width="0.800"/><path d="M0 -4.500L4.200 0H1.800V4.500H-1.800V0H-4.200Z" transform="translate(324.8,418.2) rotate(135) scale(1.18)" fill="#fbd46f" stroke="#d9a233" stroke-width="0.800"/></svg>
<div class="a" style="left:554.8px;top:127px;width:10.2px;height:325px;background:#f0f0f0"></div>
<div class="a" style="left:555px;top:134px;width:9px;height:65.4px;background:#c8c8c8"></div>
<svg style="left:555px;top:127px" width="10" height="340" fill="none">
<path d="M2.300 5l2.500-2.500 2.500 2.500" stroke="#333" stroke-width="1.100"/>
<path d="M2.300 297.500l2.500 2.500 2.500-2.500" stroke="#333" stroke-width="1.100"/>
<g fill="#fbfbfb" stroke="#d5d5d5" stroke-width="0.600"><rect x="0.800" y="304" width="8" height="7.300"/><rect x="0.800" y="311.800" width="8" height="7.300"/><rect x="0.800" y="319.600" width="8" height="7.300"/></g>
<path d="M3.200 307.300l1.600-1.700 1.600 1.700zM3.200 309.700l1.600-1.700 1.600 1.700z" fill="#111" stroke="#111" stroke-width="0.500"/>
<circle cx="4.800" cy="315.500" r="1.600" fill="#d0206a"/>
<path d="M3.200 321.500l1.600 1.700 1.600-1.700zM3.200 323.900l1.600 1.700 1.600-1.700z" fill="#111" stroke="#111" stroke-width="0.500"/>
</svg>
<div class="a" style="left:0px;top:452px;width:565px;height:12.5px;background:#f0f0f0"></div>
<div class="a" style="left:0px;top:451.5px;width:277px;height:1px;background:#9a9a9a"></div>
<div class="a" style="left:0px;top:452px;width:13px;height:12.5px;border-right:1px solid #cfcfcf"></div>
<div class="a" style="left:13px;top:452px;width:13px;height:12.5px;border-right:1px solid #cfcfcf"></div>
<div class="a" style="left:26px;top:452px;width:13px;height:12.5px;border-right:1px solid #cfcfcf"></div>
<div class="a" style="left:39px;top:452px;width:13px;height:12.5px;border-right:1px solid #cfcfcf"></div>
<svg style="left:0;top:452.300px" width="52" height="12" fill="#111" stroke="#111" stroke-width="0.700">
<path d="M3.300 4v4.600M4 6.300l2.300-2v4zM6 6.300h2.800"/>
<path d="M16.800 6.300l2.300-2v4zM18.800 6.300h2.300"/>
<path d="M34.800 6.300l-2.300-2v4zM32.800 6.300h-2.300"/>
<path d="M48.200 4v4.600M47.500 6.300l-2.300-2v4zM45.500 6.300h-2.800"/>
</svg>
<div class="t" style="top:453.70px;font-size:6.9px;line-height:10px;height:10px;color:#333;left:47.3px;width:60px;text-align:center;">Annual report</div>
<div class="a" style="left:102.5px;top:452px;width:1px;height:12px;background:#bdbdbd"></div>
<div class="a" style="left:103.5px;top:451.5px;width:62px;height:12px;background:#fff;border-bottom:1.500px solid #333;border-right:1px solid #555"></div>
<div class="t" style="top:453.50px;font-size:6.4px;line-height:9px;height:9px;color:#111;font-weight:bold;left:99.30000000000001px;width:70px;text-align:center;">«Quarterly reports»</div>
<div class="t" style="top:453.70px;font-size:6.6px;line-height:10px;height:10px;color:#333;left:160.3px;width:50px;text-align:center;">Sales plan</div>
<div class="a" style="left:203.5px;top:454px;width:1px;height:9px;background:#bdbdbd"></div>
<div class="t" style="top:454.20px;font-size:6.5px;line-height:9px;height:9px;color:#333;left:194.7px;width:50px;text-align:center;">Revenue</div>
<div class="a" style="left:236.5px;top:454px;width:1px;height:9px;background:#bdbdbd"></div>
<svg style="left:239px;top:453px" width="12" height="11"><rect x="0.500" y="0.500" width="8.500" height="7.500" fill="#fff" stroke="#8a8a8a" stroke-width="0.700"/><path d="M0.500 3h8.500M0.500 5.500h8.500M3.300 0.500v7.500M6.200 0.500v7.500" stroke="#9a9a9a" stroke-width="0.600"/><path d="M9 6v4M7 8h4" stroke="#e8a020" stroke-width="1.100"/></svg>
<div class="a" style="left:276px;top:452px;width:1px;height:12.5px;background:#d0d0d0"></div>
<div class="a" style="left:288.5px;top:453px;width:52px;height:10.5px;background:#c9c9c9"></div>
<svg style="left:277px;top:452px" width="290" height="12" fill="none" stroke="#333" stroke-width="1.100"><path d="M7.500 3.500l-2.700 2.700 2.700 2.700"/><path d="M270 3.500l2.700 2.700-2.700 2.700"/></svg>
<svg style="left:555px;top:455px" width="10" height="10" fill="none"><path d="M2.500 2.500l5 5.500M2.500 2.500v3.500M2.500 2.500h3.500" stroke="#666" stroke-width="0.900"/><path d="M1 1h7.500" stroke="#aaa" stroke-width="0.700"/></svg>
<div class="a" style="left:0px;top:464.5px;width:767px;height:13.5px;background:#f0f0f0"></div>
<div class="a" style="left:3.5px;top:467px;width:374.5px;height:11px;background:#fff;border:1px solid #e2e2e2"></div>
<div class="a" style="left:381.5px;top:467px;width:95px;height:11px;background:#fff;border:1px solid #e2e2e2"></div>
<div class="t" style="top:467.20px;font-size:7px;line-height:10px;height:10px;color:#222;left:384.5px;">Quarterly reports</div>
<div class="a" style="left:481px;top:467px;width:85.5px;height:11px;background:#fff;border:1px solid #e2e2e2"></div>
<svg style="left:567px;top:467px" width="12" height="11" fill="none" stroke="#c4c4c4" stroke-width="1.200"><path d="M2 5c0-2 2-3.500 4.500-3h3M9.500 2v3M10 6.500c0 2-2 3.500-4.500 3h-3M2.500 9.500v-3"/></svg>
<div class="a" style="left:583px;top:467px;width:23.5px;height:11px;background:#fff;border:1px solid #e2e2e2"></div>
<div class="t" style="top:467.20px;font-size:7px;line-height:10px;height:10px;color:#222;left:584.5px;width:20px;text-align:center;">Ins</div>
<div class="a" style="left:610px;top:467px;width:22.5px;height:11px;background:#fff;border:1px solid #e2e2e2"></div>
<div class="t" style="top:467.20px;font-size:7px;line-height:10px;height:10px;color:#222;left:609.3px;width:24px;text-align:center;">AUTO</div>
<svg style="left:636px;top:466px" width="90" height="12" fill="none"><path d="M3.500 6.300h4" stroke="#555" stroke-width="0.900"/><path d="M12 6.300h66" stroke="#c8c8c8" stroke-width="0.900"/><circle cx="46.400" cy="6.300" r="2.700" fill="#fff" stroke="#666" stroke-width="0.900"/><path d="M81.500 6.300h5M84 3.800v5" stroke="#555" stroke-width="0.900"/></svg>
<div class="t" style="top:466.70px;font-size:7.4px;line-height:11px;height:11px;color:#222;left:719.7px;width:30px;text-align:right;">116%</div>
<div class="t" style="top:465.80px;font-size:7px;line-height:10px;height:10px;color:#555;left:755.5px;">»</div>
<div class="a" style="left:565px;top:127px;width:202px;height:337.5px;background:#f0f0f0"></div>
<div class="a" style="left:571px;top:128px;width:14.5px;height:14.5px;background:#deebf9;border:1px solid #a3c4ea;border-radius:1px"></div>
<svg style="left:573px;top:130px" width="11" height="11" fill="none" stroke="#a2a2a2" stroke-width="0.550"><rect x="0.700" y="0.700" width="9.300" height="9.300" fill="#fff"/><rect x="0.700" y="0.700" width="9.300" height="2.600" fill="#dedede" stroke="none"/><rect x="0.700" y="0.700" width="2.800" height="9.300" fill="#dedede" stroke="none"/><path d="M0.700 3.400h9.300M0.700 6.700h9.300M3.500 0.700v9.300M6.800 0.700v9.300"/><rect x="0.700" y="0.700" width="9.300" height="9.300"/></svg>
<svg style="left:759px;top:133px" width="7" height="5"><path d="M0.500 0.500h6l-3 3.500z" fill="#222"/></svg>
<div class="a" style="left:571px;top:146.5px;width:196px;height:1px;background:#dadada"></div>
<div class="t" style="top:153.00px;font-size:7.05px;line-height:10px;height:10px;color:#111;font-weight:bold;left:572px;">Pivot table</div>
<div class="t" style="top:166.00px;font-size:7.0px;line-height:10px;height:10px;color:#151515;left:572px;">Choose fields to add to report:</div>
<div class="a" style="left:571px;top:176.8px;width:194.5px;height:101.3px;background:#fff;border:1px solid #e3e3e3"></div>
<div class="t" style="top:178.20px;font-size:7.0px;line-height:10px;height:10px;color:#151515;left:585.5px;">Division</div>
<div class="t" style="top:188.90px;font-size:7.0px;line-height:10px;height:10px;color:#151515;left:585.5px;">Manager</div>
<div class="t" style="top:199.70px;font-size:7.0px;line-height:10px;height:10px;color:#151515;left:585.5px;">Sales</div>
<div class="t" style="top:210.50px;font-size:7.0px;line-height:10px;height:10px;color:#151515;left:585.5px;">Share</div>
<div class="t" style="top:221.20px;font-size:7.0px;line-height:10px;height:10px;color:#151515;left:585.5px;">Sales target</div>
<svg style="left:563px;top:282.600px" width="8" height="26"><rect x="1.500" y="1" width="4" height="23.500" rx="0.800" fill="#fff" stroke="#a0a0a0" stroke-width="0.800"/><path d="M2.800 11.300l1.500 1.500-1.500 1.500z" fill="#444"/></svg>
<div class="t" style="top:281.20px;font-size:7.0px;line-height:10px;height:10px;color:#151515;left:572px;">Drag fields between areas below:</div>
<div class="t" style="top:293.70px;font-size:7.0px;line-height:10px;height:10px;color:#151515;left:572px;">Report filter</div>
<div class="t" style="top:293.70px;font-size:7.0px;line-height:10px;height:10px;color:#151515;left:671px;">Column labels</div>
<div class="a" style="left:571px;top:304.3px;width:95.5px;height:43.2px;background:#fff;border:1px solid #e3e3e3"></div>
<div class="a" style="left:670.3px;top:304.3px;width:96.7px;height:43.2px;background:#fff;border:1px solid #e3e3e3"></div>
<div class="t" style="top:350.80px;font-size:7.0px;line-height:10px;height:10px;color:#151515;left:572px;">Row labels</div>
<div class="t" style="top:350.80px;font-size:7.0px;line-height:10px;height:10px;color:#151515;left:671px;">Values</div>
<div class="a" style="left:571px;top:362px;width:95.5px;height:43.6px;background:#fff;border:1px solid #e3e3e3"></div>
<div class="a" style="left:670.3px;top:362px;width:96.7px;height:43.6px;background:#fff;border:1px solid #e3e3e3"></div>
<div class="t" style="top:363.50px;font-size:7.0px;line-height:10px;height:10px;color:#151515;left:574.5px;">Division</div>
<div class="t" style="top:374.20px;font-size:7.0px;line-height:10px;height:10px;color:#151515;left:574.5px;">Share</div>
<div class="t" style="top:384.90px;font-size:7.0px;line-height:10px;height:10px;color:#151515;left:574.5px;">Manager</div>
<svg style="left:0;top:0" width="767" height="478"><rect x="573.700" y="179.4" width="7" height="7" fill="#fff" stroke="#3a3a3a" stroke-width="0.750"/><path d="M575.100 183l1.700 1.800 2.800-3.800" fill="none" stroke="#333" stroke-width="0.800"/><rect x="754.300" y="178.4" width="9.400" height="9.400" fill="#e1e1e1" stroke="#adadad" stroke-width="0.700"/><path d="M757 182.1h4l-2 2.400z" fill="#111"/><rect x="573.700" y="190.1" width="7" height="7" fill="#fff" stroke="#3a3a3a" stroke-width="0.750"/><path d="M575.100 193.7l1.700 1.800 2.800-3.800" fill="none" stroke="#333" stroke-width="0.800"/><rect x="754.300" y="189.1" width="9.400" height="9.400" fill="#e1e1e1" stroke="#adadad" stroke-width="0.700"/><path d="M757 192.79999999999998h4l-2 2.400z" fill="#111"/><rect x="573.700" y="200.9" width="7" height="7" fill="#fff" stroke="#3a3a3a" stroke-width="0.750"/><rect x="754.300" y="199.9" width="9.400" height="9.400" fill="#e1e1e1" stroke="#adadad" stroke-width="0.700"/><path d="M757 203.6h4l-2 2.400z" fill="#111"/><rect x="573.700" y="211.70000000000002" width="7" height="7" fill="#fff" stroke="#3a3a3a" stroke-width="0.750"/><path d="M575.100 215.3l1.700 1.800 2.800-3.800" fill="none" stroke="#333" stroke-width="0.800"/><rect x="754.300" y="210.70000000000002" width="9.400" height="9.400" fill="#e1e1e1" stroke="#adadad" stroke-width="0.700"/><path d="M757 214.4h4l-2 2.400z" fill="#111"/><rect x="573.700" y="222.4" width="7" height="7" fill="#fff" stroke="#3a3a3a" stroke-width="0.750"/><rect x="754.300" y="221.4" width="9.400" height="9.400" fill="#e1e1e1" stroke="#adadad" stroke-width="0.700"/><path d="M757 225.1h4l-2 2.400z" fill="#111"/><rect x="654.800" y="363.7" width="9.400" height="9.400" fill="#e1e1e1" stroke="#adadad" stroke-width="0.700"/><path d="M657.500 367.40000000000003h4l-2 2.400z" fill="#111"/><rect x="654.800" y="374.4" width="9.400" height="9.400" fill="#e1e1e1" stroke="#adadad" stroke-width="0.700"/><path d="M657.500 378.1h4l-2 2.400z" fill="#111"/><rect x="654.800" y="385.09999999999997" width="9.400" height="9.400" fill="#e1e1e1" stroke="#adadad" stroke-width="0.700"/><path d="M657.500 388.8h4l-2 2.400z" fill="#111"/></svg>
<div class="a" style="left:571px;top:409.5px;width:80.5px;height:14.2px;background:#e1e1e1;border:1px solid #adadad"></div>
<div class="t" style="top:411.60px;font-size:7.0px;line-height:10px;height:10px;color:#151515;left:571.3px;width:80px;text-align:center;">Pivot table settings...</div>
<div class="a" style="left:571px;top:428.5px;width:54px;height:13.6px;background:#e1e1e1;border:1px solid #adadad"></div>
<div class="t" style="top:430.40px;font-size:7.0px;line-height:10px;height:10px;color:#6a6a6a;left:571.0px;width:54px;text-align:center;">Refresh data</div>
<div class="a" style="left:573px;top:448.5px;width:7px;height:7px;background:#fff;border:1px solid #444"></div>
<div class="t" style="top:447.20px;font-size:7.0px;line-height:10px;height:10px;color:#151515;left:584px;">Defer layout update</div>
<div class="a" style="left:567px;top:428px;width:180.5px;height:38.8px;background:linear-gradient(180deg,rgba(240,240,240,0.30) 0%,rgba(212,212,212,0.55) 25%,rgba(165,165,165,0.80) 50%,rgba(115,115,115,0.93) 75%,rgba(80,80,80,0.97) 100%)"></div>
<svg style="left:567px;top:428px" width="181" height="39">
<defs><linearGradient id="og" x1="0" y1="0" x2="0" y2="1"><stop offset="0" stop-color="#fbc23a"/><stop offset="0.450" stop-color="#f58a22"/><stop offset="1" stop-color="#e5421a"/></linearGradient>
<linearGradient id="wg" x1="0" y1="0" x2="0" y2="1"><stop offset="0" stop-color="#fff"/><stop offset="1" stop-color="#f0f0f0"/></linearGradient></defs>
<g fill="url(#wg)" stroke="#777" stroke-width="0.700" stroke-opacity="0.800">
<path fill-rule="evenodd" d="M21.300 2.200a15.500 17.500 0 1 0 0.010 0zM22.600 9.600a8.900 10.400 0 1 1 -0.010 0z"/>
<path d="M30.500 2h8.300v29.500h2.200v2h-10v-2h2v-27h-2.500z"/>
<path d="M38.500 17.500C44 10.500 50 14 57 12C55 20 46 19.500 38.500 26Z"/>
</g>
<g font-family="Liberation Sans, Noto Sans CJK SC, sans-serif" font-weight="bold" font-style="italic">
<text x="49.200" y="29.900" font-size="26.500" fill="#fff" stroke="#fff" stroke-width="3.900" stroke-linejoin="round" textLength="59" lengthAdjust="spacingAndGlyphs">西西</text>
<text x="49.200" y="29.900" font-size="26.500" fill="url(#og)" stroke="url(#og)" stroke-width="1.400" stroke-linejoin="round" textLength="59" lengthAdjust="spacingAndGlyphs">西西</text>
<text x="112.500" y="20.300" font-size="15" fill="#777" stroke="#777" stroke-width="2.200" stroke-linejoin="round" textLength="60" lengthAdjust="spacingAndGlyphs">软件园</text>
<text x="112.500" y="20.300" font-size="15" fill="#fff" stroke="#fff" stroke-width="0.500" textLength="60" lengthAdjust="spacingAndGlyphs">软件园</text>
<text x="111" y="33.300" font-size="10" fill="#fff" stroke="#666" stroke-width="0.800" paint-order="stroke" textLength="57" lengthAdjust="spacingAndGlyphs">CR173.COM</text>
</g>
</svg>
</div></body></html>
